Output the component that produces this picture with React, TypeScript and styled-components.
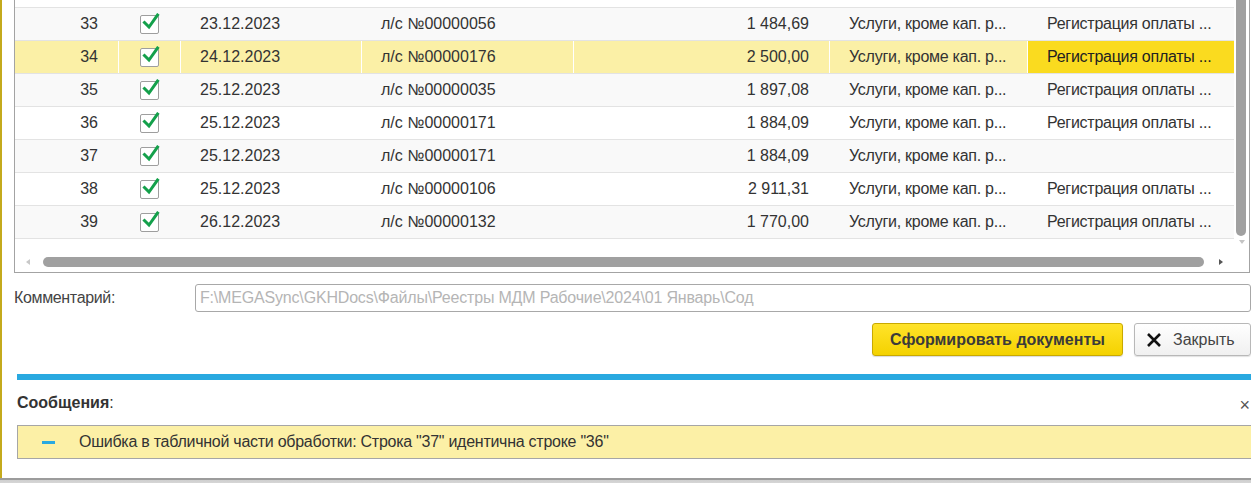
import React from "react";
import styled, { createGlobalStyle } from "styled-components";

const Global = createGlobalStyle`
  html, body { margin: 0; padding: 0; background: #fff; }
  body { font-family: "Liberation Sans", Arial, sans-serif; font-size: 16px; color: #333; }
  #root { width: 1251px; height: 483px; overflow: hidden; }
`;

const Page = styled.div`
  display: flex;
  flex-direction: column;
  width: 1251px;
  height: 483px;
`;

const Main = styled.div`
  flex: 1;
  display: flex;
  flex-direction: column;
  border-left: 2px solid #c4aa1c;
  min-height: 0;
`;

const BottomBar = styled.div`
  height: 5px;
  flex: none;
  background: linear-gradient(#9c9c9c 0, #9c9c9c 2px, #cfcfcf 2px, #d6d6d6 100%);
`;

const Tight = styled.span<{ $ls?: number }>`
  letter-spacing: ${(p) => (p.$ls ?? -0.26)}px;
`;

const TableFrame = styled.div`
  margin: 0 1px 0 12px;
  height: 272px;
  flex: none;
  border: 1px solid #a3a3a3;
  border-top: none;
  display: grid;
  grid-template-columns: 1fr 15px;
  grid-template-rows: 1fr 20px;
  overflow: hidden;
`;

const Rows = styled.div`
  padding-top: 7px;
  overflow: hidden;
`;

const Row = styled.div<{ $bg: string; $last?: boolean }>`
  display: grid;
  grid-template-columns: 104px 62px 181px 212px 256px 198px 206px;
  height: 32px;
  border-top: 1px solid #e3e3e3;
  ${(p) => (p.$last ? "border-bottom: 1px solid #e3e3e3;" : "")}
  background: ${(p) => p.$bg};
`;

const Cell = styled.div<{ $align?: "left" | "right" | "center"; $sep?: boolean; $active?: boolean }>`
  display: flex;
  align-items: center;
  justify-content: ${(p) => (p.$align === "right" ? "flex-end" : p.$align === "center" ? "center" : "flex-start")};
  padding: 0 ${(p) => (p.$align === "right" ? "20px" : "0")} 0 ${(p) => (p.$align === "left" || !p.$align ? "19px" : "0")};
  border-right: 1px solid ${(p) => (p.$sep ? "#ffffff" : "transparent")};
  background: ${(p) => (p.$active ? "#fadb1f" : "transparent")};
  color: ${(p) => (p.$active ? "#222" : "#333")};
  white-space: nowrap;
  overflow: hidden;
  &:last-child { border-right: none; }
`;

const CheckBox = styled.div`
  position: relative;
  width: 17px;
  height: 17px;
  border: 1px solid #9e9e9e;
  border-radius: 2px;
  background: #fff;
  margin-top: 1px;
  svg { position: absolute; left: 1px; top: -3px; }
`;

const VScroll = styled.div`
  grid-row: 1;
  grid-column: 2;
  position: relative;
`;

const VThumb = styled.div`
  position: absolute;
  left: 2px;
  top: -10px;
  width: 10px;
  height: 246px;
  border-radius: 5px;
  background: #a0a0a0;
`;

const VArrow = styled.div`
  position: absolute;
  left: 5px;
  top: 240px;
  width: 0;
  height: 0;
  border-left: 3px solid transparent;
  border-right: 3px solid transparent;
  border-top: 4px solid #c4c4c4;
`;

const HScroll = styled.div`
  grid-row: 2;
  grid-column: 1;
  display: flex;
  align-items: center;
  padding: 0 11px 0 11px;
  gap: 13px;
`;

const HArrow = styled.div<{ $dir: "left" | "right" }>`
  width: 0;
  height: 0;
  border-top: 3px solid transparent;
  border-bottom: 3px solid transparent;
  ${(p) =>
    p.$dir === "left"
      ? "border-right: 4px solid #c8c8c8;"
      : "border-left: 4px solid #555;"}
  flex: none;
`;

const HTrack = styled.div`
  flex: 1;
  height: 10px;
  display: flex;
  padding-right: 2px;
`;

const HThumb = styled.div`
  flex: 1;
  border-radius: 5px;
  background: #a0a0a0;
`;

const CommentRow = styled.div`
  display: flex;
  align-items: center;
  margin: 11px 0 0 12px;
  height: 28px;
`;

const Label = styled.div`
  width: 181px;
  color: #444;
`;

const Input = styled.div`
  flex: 1;
  height: 26px;
  border: 1px solid #a8a8a8;
  border-radius: 3px;
  display: flex;
  align-items: center;
  padding-left: 4px;
  color: #b5b5b5;
  white-space: nowrap;
  overflow: hidden;
`;

const Buttons = styled.div`
  display: flex;
  justify-content: flex-end;
  gap: 11px;
  margin-top: 11px;
  height: 33px;
`;

const PrimaryButton = styled.div`
  box-sizing: border-box;
  width: 251px;
  height: 33px;
  border: 1px solid #c9a900;
  border-radius: 3px;
  background: linear-gradient(#ffe32a, #f4d200);
  display: flex;
  align-items: center;
  justify-content: center;
  font-weight: bold;
  color: #3a3a3a;
  box-shadow: 0 1px 1px rgba(0, 0, 0, 0.15);
`;

const CloseButton = styled.div`
  box-sizing: border-box;
  width: 117px;
  height: 33px;
  border: 1px solid #b8b8b8;
  border-radius: 3px;
  background: linear-gradient(#ffffff, #f0f0f0);
  display: flex;
  align-items: center;
  padding-left: 11px;
  gap: 11px;
  color: #444;
  box-shadow: 0 1px 1px rgba(0, 0, 0, 0.12);
`;

const Messages = styled.div`
  margin: 18px 0 0 15px;
  display: flex;
  flex-direction: column;
`;

const BlueLine = styled.div`
  height: 6px;
  background: #29a9e0;
`;

const MsgHeader = styled.div`
  height: 45px;
  display: flex;
  align-items: center;
  justify-content: space-between;
`;

const MsgTitle = styled.div`
  color: #333;
  b { font-weight: bold; }
`;

const CloseX = styled.div`
  margin-right: 1px;
  margin-top: 5px;
  color: #555;
  font-size: 18px;
  line-height: 1;
`;

const MsgBox = styled.div`
  height: 32px;
  border: 1px solid #a6a6a6;
  border-right: none;
  background: #fcf0a6;
  display: flex;
  align-items: center;
  color: #333;
`;

const Dash = styled.div`
  width: 13px;
  height: 3px;
  background: #29a9e0;
  margin: 0 24px 0 24px;
`;

type Rec = { n: number; date: string; acc: string; sum: string; reg: boolean };

const data: Rec[] = [
  { n: 33, date: "23.12.2023", acc: "л/с №00000056", sum: "1 484,69", reg: true },
  { n: 34, date: "24.12.2023", acc: "л/с №00000176", sum: "2 500,00", reg: true },
  { n: 35, date: "25.12.2023", acc: "л/с №00000035", sum: "1 897,08", reg: true },
  { n: 36, date: "25.12.2023", acc: "л/с №00000171", sum: "1 884,09", reg: true },
  { n: 37, date: "25.12.2023", acc: "л/с №00000171", sum: "1 884,09", reg: false },
  { n: 38, date: "25.12.2023", acc: "л/с №00000106", sum: "2 911,31", reg: true },
  { n: 39, date: "26.12.2023", acc: "л/с №00000132", sum: "1 770,00", reg: true },
];

const Check = () => (
  <CheckBox>
    <svg width="18" height="18" viewBox="0 0 18 18">
      <path d="M2.5 9.5 L7 14 L15.5 2" fill="none" stroke="#14a04b" strokeWidth="3" strokeLinecap="square" />
    </svg>
  </CheckBox>
);

const XIcon = () => (
  <svg width="16" height="16" viewBox="0 0 16 16">
    <path d="M2 2 L14 14 M14 2 L2 14" stroke="#111" strokeWidth="2.6" />
  </svg>
);

export default function App() {
  return (
    <Page>
      <Global />
      <Main>
        <TableFrame>
          <Rows>
            {data.map((r, i) => {
              const selected = r.n === 34;
              const bg = selected ? "#fbf0a6" : i % 2 === 0 ? "#f9f9f9" : "#ffffff";
              return (
                <Row key={r.n} $bg={bg} $last={i === data.length - 1}>
                  <Cell $align="right" $sep={selected}>{r.n}</Cell>
                  <Cell $align="center" $sep={selected}><Check /></Cell>
                  <Cell $sep={selected}>{r.date}</Cell>
                  <Cell $sep={selected}>{r.acc}</Cell>
                  <Cell $align="right" $sep={selected}>{r.sum}</Cell>
                  <Cell $sep={selected}><Tight>Услуги, кроме кап. р...</Tight></Cell>
                  <Cell $active={selected}>{r.reg ? <Tight>Регистрация оплаты ...</Tight> : ""}</Cell>
                </Row>
              );
            })}
          </Rows>
          <VScroll>
            <VThumb />
            <VArrow />
          </VScroll>
          <HScroll>
            <HArrow $dir="left" />
            <HTrack><HThumb /></HTrack>
            <HArrow $dir="right" />
          </HScroll>
        </TableFrame>

        <CommentRow>
          <Label><Tight $ls={-0.35}>Комментарий:</Tight></Label>
          <Input><Tight $ls={-0.18}>F:\MEGASync\GKHDocs\Файлы\Реестры МДМ Рабочие\2024\01 Январь\Сод</Tight></Input>
        </CommentRow>

        <Buttons>
          <PrimaryButton>Сформировать документы</PrimaryButton>
          <CloseButton><XIcon /><Tight $ls={0}>Закрыть</Tight></CloseButton>
        </Buttons>

        <Messages>
          <BlueLine />
          <MsgHeader>
            <MsgTitle><b>Сообщения</b>:</MsgTitle>
            <CloseX>×</CloseX>
          </MsgHeader>
          <MsgBox>
            <Dash />
            <Tight>Ошибка в табличной части обработки: Строка "37" идентична строке "36"</Tight>
          </MsgBox>
        </Messages>
      </Main>
      <BottomBar />
    </Page>
  );
}
